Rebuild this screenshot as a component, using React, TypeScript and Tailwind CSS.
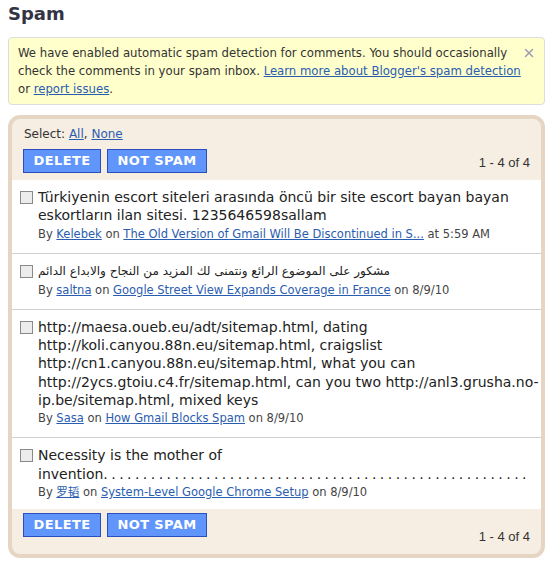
import { X } from "lucide-react";

type SpamComment = {
  lines: string[];
  rtl?: boolean;
  author: string;
  post: string;
  when: string;
};

const comments: SpamComment[] = [
  {
    lines: [
      "Türkiyenin escort siteleri arasında öncü bir site escort bayan bayan",
      "eskortların ilan sitesi. 1235646598sallam",
    ],
    author: "Kelebek",
    post: "The Old Version of Gmail Will Be Discontinued in S...",
    when: "at 5:59 AM",
  },
  {
    lines: ["مشكور على الموضوع الرائع ونتمنى لك المزيد من النجاح والابداع الدائم"],
    rtl: true,
    author: "saltna",
    post: "Google Street View Expands Coverage in France",
    when: "on 8/9/10",
  },
  {
    lines: [
      "http://maesa.oueb.eu/adt/sitemap.html, dating",
      "http://koli.canyou.88n.eu/sitemap.html, craigslist",
      "http://cn1.canyou.88n.eu/sitemap.html, what you can",
      "http://2ycs.gtoiu.c4.fr/sitemap.html, can you two http://anl3.grusha.no-",
      "ip.be/sitemap.html, mixed keys",
    ],
    author: "Sasa",
    post: "How Gmail Blocks Spam",
    when: "on 8/9/10",
  },
  {
    lines: ["Necessity is the mother of", "invention"],
    author: "罗韬",
    post: "System-Level Google Chrome Setup",
    when: "on 8/9/10",
  },
];

const dots = ".".repeat(54);

function ActionBar({ footer }: { footer?: boolean }) {
  return (
    <div className={`flex justify-between px-[11px] ${footer ? "items-end" : "items-center"}`}>
      <div className="flex gap-[6px]">
        <button className="h-[24px] w-[78px] border border-[#2a4fbd] bg-[#6096fb] text-[13px] font-bold tracking-[0.03em] text-white">
          DELETE
        </button>
        <button className="h-[24px] w-[100px] border border-[#2a4fbd] bg-[#6096fb] text-[13px] font-bold tracking-[0.03em] text-white">
          NOT SPAM
        </button>
      </div>
      <span
        className={`text-[13px] leading-[16px] text-[#333] [font-family:'Liberation_Sans',sans-serif] ${
          footer ? "mb-[-8px]" : "mt-[3px]"
        }`}
      >
        1 - 4 of 4
      </span>
    </div>
  );
}

function CommentRow({ c, last }: { c: SpamComment; last: boolean }) {
  return (
    <div className={`flex gap-[5px] px-[8px] pt-[8px] ${last ? "pb-[8px]" : "pb-[10px] border-b border-[#d0d0d0]"}`}>
      <input
        type="checkbox"
        className="mt-[3px] h-[13px] w-[13px] shrink-0 appearance-none border border-[#8a8a8a] bg-[#ececec]"
      />
      <div className="min-w-0 whitespace-nowrap">
        <div
          dir={c.rtl ? "rtl" : "ltr"}
          className={`${c.rtl ? "text-left text-[12px] leading-[19.3px]" : "text-[14px] leading-[18.3px]"} text-[#222]`}
        >
          {c.lines.map((l, i) => (
            <div key={i}>
              {l}
              {c.author === "罗韬" && i === 1 && <span className="tracking-[3.45px]">{dots}</span>}
            </div>
          ))}
        </div>
        <div className="text-[11.5px] leading-[18px] text-[#444]">
          By{" "}
          <a className="text-[#2a5db0] underline [font-family:'DejaVu_Sans','Noto_Sans_CJK_SC',sans-serif]">
            {c.author}
          </a>{" "}
          on <a className="text-[#2a5db0] underline">{c.post}</a> {c.when}
        </div>
      </div>
    </div>
  );
}

export default function App() {
  return (
    <div className="min-h-[561px] w-[553px] bg-white px-[8px] pt-[3px] [font-family:'DejaVu_Sans',sans-serif]">
      <h1 className="text-[18px] font-bold leading-[22px] text-[#333344]">Spam</h1>

      <div className="relative mt-[12px] rounded-[4px] border border-[#dddddd] bg-[#ffffcc] px-[9px] pt-[6px] pb-[6px] text-[13px] leading-[18px] text-[#333] [font-family:'DejaVu_Sans_Condensed','DejaVu_Sans',sans-serif]">
        <p className="whitespace-nowrap">
          We have enabled automatic spam detection for comments. You should occasionally
          <br />
          check the comments in your spam inbox.{" "}
          <a className="text-[#2a5db0] underline">Learn more about Blogger's spam detection</a>
          <br />
          or <a className="text-[#2a5db0] underline">report issues</a>.
        </p>
        <X className="absolute right-[8px] top-[8px] h-[14px] w-[14px] text-[#a09cb0]" strokeWidth={2.5} />
      </div>

      <div className="mt-[10px] overflow-hidden rounded-[12px] border-[4px] border-[#e6d5c3] bg-[#f6eee2]">
        <div className="px-[12px] pt-[7px] pb-[7px] text-[12px] leading-[16px] text-[#333]">
          Select: <a className="text-[#2a5db0] underline">All</a>,{" "}
          <a className="text-[#2a5db0] underline">None</a>
        </div>
        <ActionBar />
        <div className="mt-[7px] bg-white">
          {comments.map((c, i) => (
            <CommentRow key={i} c={c} last={i === comments.length - 1} />
          ))}
        </div>
        <div className="pt-[4px] pb-[17px]">
          <ActionBar footer />
        </div>
      </div>
    </div>
  );
}
